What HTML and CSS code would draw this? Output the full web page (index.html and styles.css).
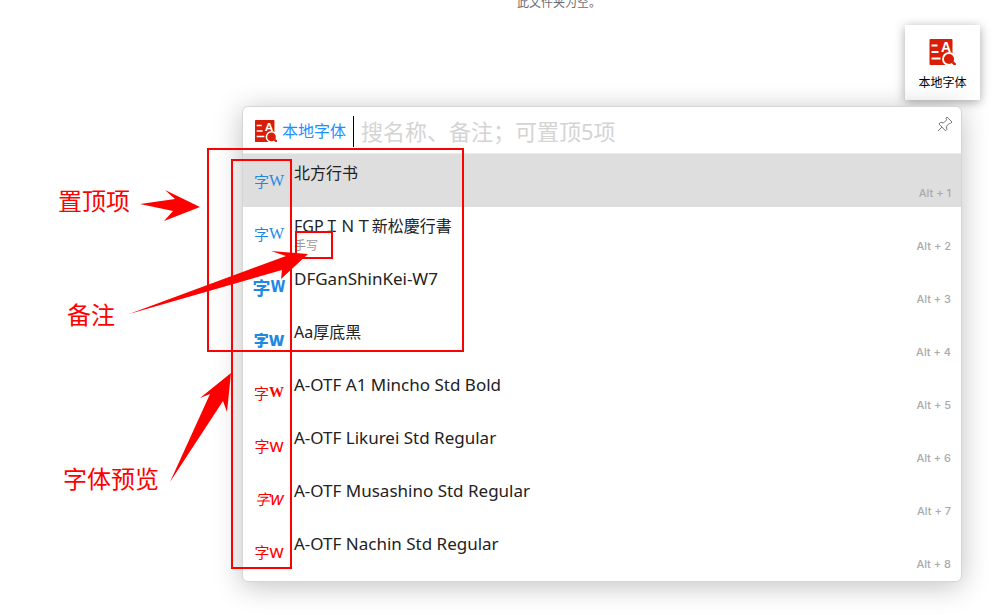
FILE: index.html
```html
<!DOCTYPE html>
<html lang="zh-CN">
<head>
    <meta charset="UTF-8">
    <meta name="viewport" content="width=device-width, initial-scale=1.0">
    <title>本地字体</title>
    <link rel="stylesheet" href="styles.css">
</head>
<body>
    <svg class="sprite" aria-hidden="true">
        <symbol id="logo" viewBox="0 0 26 26">
            <rect width="23" height="26" rx="1" fill="#d81e06"/>
            <path d="M2 6.500h6M2 13h7M2 19.500h9" stroke="#fff" stroke-width="1.800"/>
            <text x="16.500" y="12.500" class="logo-letter">A</text>
            <circle cx="19.500" cy="20" r="6" fill="#d81e06" stroke="#fff" stroke-width="1.800"/>
            <path d="M23 23l3 3" stroke="#d81e06" stroke-width="2.500"/>
        </symbol>
    </svg>

    <p class="folder-empty">此文件夹为空。</p>

    <button class="tile" type="button">
        <svg class="tile-icon"><use href="#logo"/></svg>
        <span>本地字体</span>
    </button>

    <main class="panel">
        <header class="search">
            <svg class="search-icon"><use href="#logo"/></svg>
            <label for="query">本地字体</label>
            <input id="query" type="text" placeholder="搜名称、备注；可置顶5项">
            <button class="pin" type="button" aria-label="固定">
                <svg viewBox="0 0 16 16"><path d="M10 1l5 5-1.500 1.500-1-.3-3 3 .3 3.300-1.300 1.300L2 8l1.300-1.500 3.400.3 3-3L9 2.500zM5 11l-4 4"/></svg>
            </button>
        </header>

        <ul class="fonts">
            <li class="font selected">
                <span class="preview pinned light">字<b>W</b></span>
                <div class="info"><p class="name">北方行书</p></div>
                <kbd>Alt + 1</kbd>
            </li>
            <li class="font">
                <span class="preview pinned light">字<b>W</b></span>
                <div class="info"><p class="name">FGPＩＮＴ新松慶行書</p><p class="note">手写</p></div>
                <kbd>Alt + 2</kbd>
            </li>
            <li class="font">
                <span class="preview pinned narrow">字<b>W</b></span>
                <div class="info"><p class="name latin">DFGanShinKei-W7</p></div>
                <kbd>Alt + 3</kbd>
            </li>
            <li class="font">
                <span class="preview pinned heavy">字<b>W</b></span>
                <div class="info"><p class="name">Aa厚底黑</p></div>
                <kbd>Alt + 4</kbd>
            </li>
            <li class="font">
                <span class="preview serif">字<b>W</b></span>
                <div class="info"><p class="name latin">A-OTF A1 Mincho Std Bold</p></div>
                <kbd>Alt + 5</kbd>
            </li>
            <li class="font">
                <span class="preview">字<b>W</b></span>
                <div class="info"><p class="name latin">A-OTF Likurei Std Regular</p></div>
                <kbd>Alt + 6</kbd>
            </li>
            <li class="font">
                <span class="preview slanted">字<b>W</b></span>
                <div class="info"><p class="name latin">A-OTF Musashino Std Regular</p></div>
                <kbd>Alt + 7</kbd>
            </li>
            <li class="font">
                <span class="preview">字<b>W</b></span>
                <div class="info"><p class="name latin">A-OTF Nachin Std Regular</p></div>
                <kbd>Alt + 8</kbd>
            </li>
        </ul>
    </main>

    <!-- callouts drawn over the panel -->
    <svg class="callouts" width="480" height="580">
        <g class="boxes">
            <rect x="208" y="149" width="255" height="202"/>
            <rect x="232" y="160" width="59" height="408"/>
            <rect x="296" y="232" width="36" height="26"/>
        </g>
        <g class="arrows">
            <polygon points="140,204 175,199 165,190 200,207 164,221 173,211"/>
            <polygon points="129,314 286,256 271,251 308,254 281,279 282,270"/>
            <polygon points="170,482 210,394 200,398 231,373 227,412 223,401"/>
        </g>
        <text x="58" y="210">置顶项</text>
        <text x="67" y="324">备注</text>
        <text x="63" y="488">字体预览</text>
    </svg>
</body>
</html>
```
FILE: styles.css
```css
* {
    margin: 0;
    padding: 0;
    box-sizing: border-box;
}

body {
    position: relative;
    padding: 0 26px 0 242px;
    font-family: "Noto Sans", "Noto Sans CJK SC", sans-serif;
    font-size: 16px;
    color: #222;
    background-color: #fff;
    overflow: hidden;
}

button {
    border: none;
    background: none;
    font-family: inherit;
    cursor: pointer;
}

.sprite {
    display: none;
}

.logo-letter {
    font: bold 14px "Liberation Sans", sans-serif;
    fill: #fff;
    text-anchor: middle;
}

.folder-empty {
    height: 25px;
    margin-top: -7px;
    margin-bottom: 7px;
    padding-right: 104px;
    font-size: 12px;
    line-height: 20px;
    color: #6d6d6d;
    text-align: center;
}

.tile {
    display: flex;
    flex-direction: column;
    align-items: center;
    width: 75px;
    height: 75px;
    margin-left: auto;
    padding-top: 14px;
    gap: 10px;
    background-color: #fff;
    box-shadow: 0 2px 10px rgba(0, 0, 0, 0.35);
    font-size: 12px;
    line-height: 16px;
    color: #000;
}

.tile-icon {
    width: 27px;
    height: 26px;
}

.panel {
    margin: 6px 18px 40px 0;
    padding-bottom: 3px;
    background-color: #fff;
    border: 1px solid #d6d6d6;
    border-radius: 6px;
    box-shadow: 0 4px 28px rgba(0, 0, 0, 0.25);
}

.search {
    display: flex;
    align-items: center;
    height: 47px;
    padding: 2px 8px 0 12px;
    border-bottom: 1px solid #ececec;
}

.search-icon {
    width: 22px;
    height: 22px;
    margin-right: 5px;
}

.search label {
    padding-right: 7px;
    border-right: 1px solid #000;
    line-height: 31px;
    color: #1e90ff;
}

.search input {
    flex: 1;
    min-width: 0;
    padding-left: 7px;
    border: none;
    outline: none;
    background: none;
    font-family: inherit;
    font-size: 22px;
}

.search input::placeholder {
    color: #d4d4d4;
}

.pin {
    align-self: flex-start;
    padding-top: 7px;
}

.pin svg {
    display: block;
    width: 16px;
    height: 16px;
    fill: none;
    stroke: #777;
}

.fonts {
    list-style: none;
}

.font {
    display: flex;
    height: 53px;
    padding: 0 10px 0 11px;
}

.selected {
    background-color: #dedede;
}

.preview {
    display: flex;
    align-items: center;
    justify-content: center;
    width: 30px;
    margin-right: 10px;
    font-size: 15px;
    color: #f00;
}

.preview b {
    font-family: "Noto Sans", sans-serif;
    font-weight: 500;
}

.preview.pinned {
    color: #1e88e5;
}

.preview.light b {
    font-family: "Liberation Serif", serif;
    font-size: 16px;
    font-weight: normal;
}

.preview.serif b {
    font-family: "Liberation Serif", serif;
    font-weight: bold;
}

.preview.slanted {
    font-style: italic;
}

.preview.narrow {
    font-size: 18px;
    font-weight: bold;
}

.preview.narrow b {
    font-family: "Liberation Sans Narrow", "DejaVu Sans Condensed", sans-serif;
    font-size: 15px;
    font-weight: bold;
}

.preview.heavy,
.preview.heavy b {
    font-weight: 900;
}

.info {
    flex: 1;
    padding-top: 8px;
}

.name {
    line-height: 22px;
}

.latin {
    font-size: 17px;
}

.note {
    font-size: 12px;
    line-height: 18px;
    color: #999;
}

kbd {
    align-self: flex-end;
    padding-bottom: 6px;
    font-family: Inter, sans-serif;
    font-size: 11px;
    font-weight: 500;
    line-height: 15px;
    color: #aaa;
}

.callouts {
    position: absolute;
    top: 0;
    left: 0;
    pointer-events: none;
}

.callouts text {
    font-size: 24px;
    fill: #f00;
}

.boxes {
    fill: none;
    stroke: #f00;
    stroke-width: 2px;
}

.arrows {
    fill: #f00;
}
```
